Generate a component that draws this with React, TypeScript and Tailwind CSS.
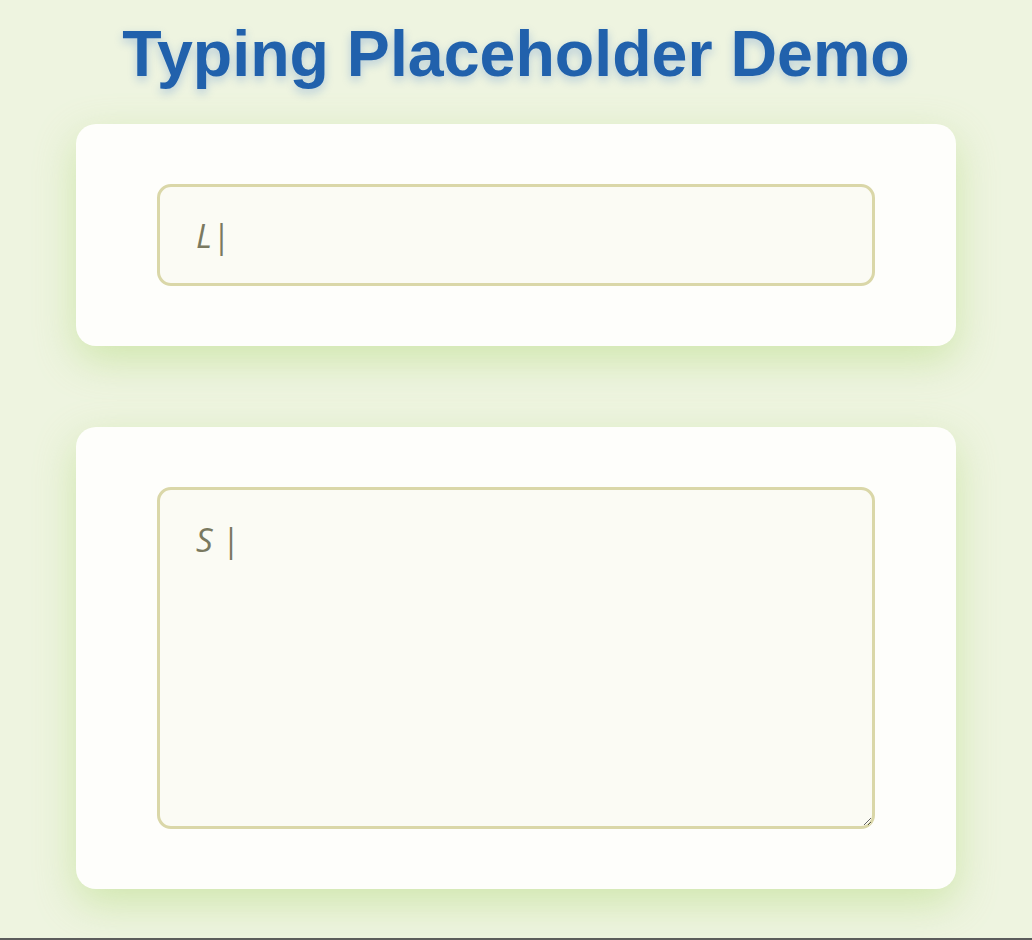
import { useState } from "react";

// Typing placeholder demo: static frame of the animated placeholders.
export default function App() {
  const [name, setName] = useState("");
  const [msg, setMsg] = useState("");

  return (
    <div className="box-border flex h-[940px] flex-col items-center border-b-2 border-[#5c5c5c] bg-[#eef4e0] font-['Liberation_Sans',Arial,sans-serif]">
      <h1 className="mt-[14px] text-[64.5px] leading-[80px] font-bold text-[#2161ac] [text-shadow:0_4px_10px_rgba(37,99,200,0.28)]">
        Typing Placeholder Demo
      </h1>

      <div className="mt-[30px] w-[880px] rounded-[20px] bg-[#fefefb] px-[81px] py-[60px] shadow-[0_14px_40px_rgba(170,215,110,0.45)]">
        <input
          value={name}
          onChange={(e) => setName(e.target.value)}
          placeholder="L|"
          className="box-border h-[102px] w-full rounded-[14px] border-[3px] border-[#dad7a8] bg-[#fbfbf4] px-[36px] font-['Open_Sans',sans-serif] text-[33px] text-[#7a7960] italic outline-none placeholder:text-[#7a7960]"
        />
      </div>

      <div className="mt-[81px] w-[880px] rounded-[20px] bg-[#fefefb] px-[81px] py-[60px] shadow-[0_14px_40px_rgba(170,215,110,0.45)]">
        <textarea
          value={msg}
          onChange={(e) => setMsg(e.target.value)}
          placeholder="S |"
          className="box-border block h-[342px] w-full rounded-[14px] border-[3px] border-[#dad7a8] bg-[#fbfbf4] px-[36px] pt-[26px] font-['Open_Sans',sans-serif] text-[33px] leading-[48px] text-[#7a7960] italic outline-none placeholder:text-[#7a7960]"
        />
      </div>
    </div>
  );
}
